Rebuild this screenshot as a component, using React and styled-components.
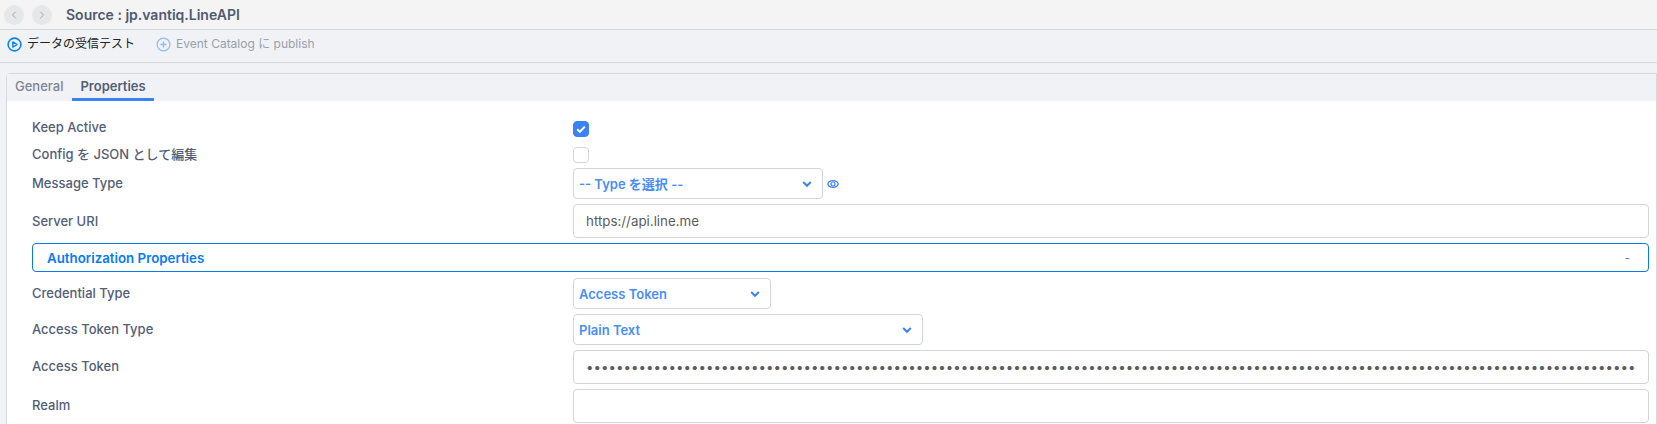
import React from "react";
import styled, { createGlobalStyle } from "styled-components";
import { FiChevronLeft, FiChevronRight } from "react-icons/fi";

const GlobalStyle = createGlobalStyle`
  html, body {
    margin: 0;
    padding: 0;
    background-color: #f0f2f6;
    overflow: hidden;
  }
  body {
    font-family: Inter, "Noto Sans CJK JP", sans-serif;
  }
  * {
    box-sizing: border-box;
  }
`;

const Page = styled.div`
  width: 1657px;
  height: 424px;
  overflow: hidden;
`;

const Header = styled.div`
  display: flex;
  align-items: center;
  height: 30px;
  padding-left: 4px;
  background-color: #f4f4f5;
  border-bottom: 1px solid #d5dae0;
`;

const NavButton = styled.div`
  display: flex;
  align-items: center;
  justify-content: center;
  width: 20px;
  height: 20px;
  margin-right: 8px;
  border-radius: 50%;
  background-color: #e6e7e9;
  color: #a3a7ae;
  font-size: 12px;
`;

const Title = styled.h1`
  margin: 0 0 0 6px;
  font-size: 14px;
  line-height: 20px;
  font-weight: 600;
  color: #4f5a70;
`;

const Toolbar = styled.div`
  display: flex;
  align-items: center;
  height: 33px;
  padding: 0 0 4px 7px;
  background-color: #f0f2f6;
  border-bottom: 1px solid #d5dae0;
`;

const ToolButton = styled.div`
  display: flex;
  align-items: center;
  gap: 5px;
  margin-right: 21px;
  font-size: 12px;
  line-height: 16px;
  color: ${(props) => (props.disabled ? "#9aa0aa" : "#222")};
`;

const Panel = styled.div`
  margin: 10px 0 0 6px;
  border: 1px solid #d5dae0;
  border-radius: 4px 0 0 0;
  background-color: #fff;
`;

const Tabs = styled.div`
  display: flex;
  gap: 1px;
  height: 27px;
  background-color: #f0f2f6;
`;

const Tab = styled.div`
  padding: 0 8px;
  line-height: 24px;
  font-size: 13px;
  font-weight: ${(props) => (props.active ? 600 : 500)};
  color: ${(props) => (props.active ? "#535e75" : "#7e8593")};
  border-bottom: 3px solid ${(props) => (props.active ? "#3b82f6" : "transparent")};
`;

const Body = styled.div`
  padding: 20px 7px 0 25px;
`;

const Row = styled.div`
  display: grid;
  grid-template-columns: 541px 1fr;
  align-items: center;
  min-height: ${(props) => props.height || 16}px;
  margin-bottom: ${(props) => props.gap || 5}px;
`;

const Label = styled.label`
  display: block;
  height: 16px;
  line-height: ${(props) => 16 - (props.lift ?? 2)}px;
  font-size: 13px;
  font-weight: 500;
  color: #535e75;
`;

const ControlGroup = styled.div`
  display: flex;
  align-items: center;
  gap: 4px;
`;

const Checkbox = styled.div`
  display: flex;
  align-items: center;
  justify-content: center;
  width: 16px;
  height: 16px;
  border-radius: 4px;
  border: 1px solid ${(props) => (props.checked ? "#3b82f6" : "#d1d5db")};
  background-color: ${(props) => (props.checked ? "#3b82f6" : "#fff")};
`;

const Select = styled.div`
  display: flex;
  align-items: center;
  justify-content: space-between;
  width: ${(props) => props.width}px;
  height: 31px;
  padding: 0 10px 0 5px;
  border: 1px solid #d1d5db;
  border-radius: 4px;
  background-color: #fff;
  font-size: 13px;
  line-height: 16px;
  font-weight: 600;
  color: #4a8df6;
`;

const TextInput = styled.input`
  display: block;
  width: 100%;
  height: 34px;
  padding: 0 11px 0 12px;
  border: 1px solid #d1d5db;
  border-radius: 4px;
  outline: none;
  background-color: #fff;
  font-family: Inter, sans-serif;
  font-size: 13.33px;
  color: #5c5c5c;
`;

const Section = styled.div`
  display: flex;
  align-items: center;
  justify-content: space-between;
  height: 29px;
  margin-bottom: 6px;
  padding: 0 18px 0 14px;
  border: 1px solid #0a7af0;
  border-radius: 4px;
`;

const SectionTitle = styled.span`
  font-size: 13.3px;
  line-height: 16px;
  font-weight: 600;
  color: #0a7af0;
`;

const SectionToggle = styled.span`
  font-size: 12px;
  line-height: 16px;
  color: #5b8fd0;
`;

const PlayIcon = () => (
  <svg width="15" height="15" viewBox="0 0 16 16" fill="none" stroke="#0a84f0">
    <circle cx="8" cy="8" r="6.8" strokeWidth="1.7" />
    <path d="M6.2 5.2 L10.8 8 L6.2 10.8 Z" strokeWidth="1.5" strokeLinejoin="round" />
  </svg>
);

const PlusIcon = () => (
  <svg width="15" height="15" viewBox="0 0 16 16" fill="none" stroke="#8fbdf2">
    <circle cx="8" cy="8" r="6.8" strokeWidth="1.3" />
    <path d="M8 4.8 V11.2 M4.8 8 H11.2" strokeWidth="1.5" />
  </svg>
);

const CheckIcon = () => (
  <svg width="12" height="12" viewBox="0 0 12 12" fill="none" stroke="#fff">
    <path d="M2.2 6.3 L4.9 8.8 L9.8 3.6" strokeWidth="2" />
  </svg>
);

const EyeIcon = () => (
  <svg width="12" height="12" viewBox="0 0 12 12" fill="none" stroke="#3b82f6">
    <path d="M0.8 6 C2 1.6 10 1.6 11.2 6 C10 10.4 2 10.4 0.8 6 Z" strokeWidth="1.2" />
    <circle cx="6" cy="6" r="2" strokeWidth="1.2" />
  </svg>
);

const ChevronIcon = () => (
  <svg width="10" height="8" viewBox="0 0 10 8" fill="none" stroke="#3b82f6">
    <path d="M1.2 2 L5 5.8 L8.8 2" strokeWidth="2" />
  </svg>
);

const token = "x".repeat(200);

const App = () => {
  return (
    <Page>
      <GlobalStyle />
      <Header>
        <NavButton>
          <FiChevronLeft />
        </NavButton>
        <NavButton>
          <FiChevronRight />
        </NavButton>
        <Title>Source : jp.vantiq.LineAPI</Title>
      </Header>
      <Toolbar>
        <ToolButton>
          <PlayIcon />
          データの受信テスト
        </ToolButton>
        <ToolButton disabled>
          <PlusIcon />
          Event Catalog に publish
        </ToolButton>
      </Toolbar>
      <Panel>
        <Tabs>
          <Tab>General</Tab>
          <Tab active>Properties</Tab>
        </Tabs>
        <Body>
          <Row gap={10}>
            <Label lift={3}>Keep Active</Label>
            <Checkbox checked>
              <CheckIcon />
            </Checkbox>
          </Row>
          <Row>
            <Label>Config を JSON として編集</Label>
            <Checkbox />
          </Row>
          <Row height={31}>
            <Label>Message Type</Label>
            <ControlGroup>
              <Select width={250}>
                -- Type を選択 --
                <ChevronIcon />
              </Select>
              <EyeIcon />
            </ControlGroup>
          </Row>
          <Row height={34}>
            <Label lift={0}>Server URI</Label>
            <TextInput readOnly value="https://api.line.me" />
          </Row>
          <Section>
            <SectionTitle>Authorization Properties</SectionTitle>
            <SectionToggle>-</SectionToggle>
          </Section>
          <Row height={31}>
            <Label>Credential Type</Label>
            <Select width={198}>
              Access Token
              <ChevronIcon />
            </Select>
          </Row>
          <Row height={31}>
            <Label>Access Token Type</Label>
            <Select width={350}>
              Plain Text
              <ChevronIcon />
            </Select>
          </Row>
          <Row height={34}>
            <Label>Access Token</Label>
            <TextInput readOnly type="password" value={token} />
          </Row>
          <Row height={34}>
            <Label>Realm</Label>
            <TextInput readOnly value="" />
          </Row>
        </Body>
      </Panel>
    </Page>
  );
};

export default App;
